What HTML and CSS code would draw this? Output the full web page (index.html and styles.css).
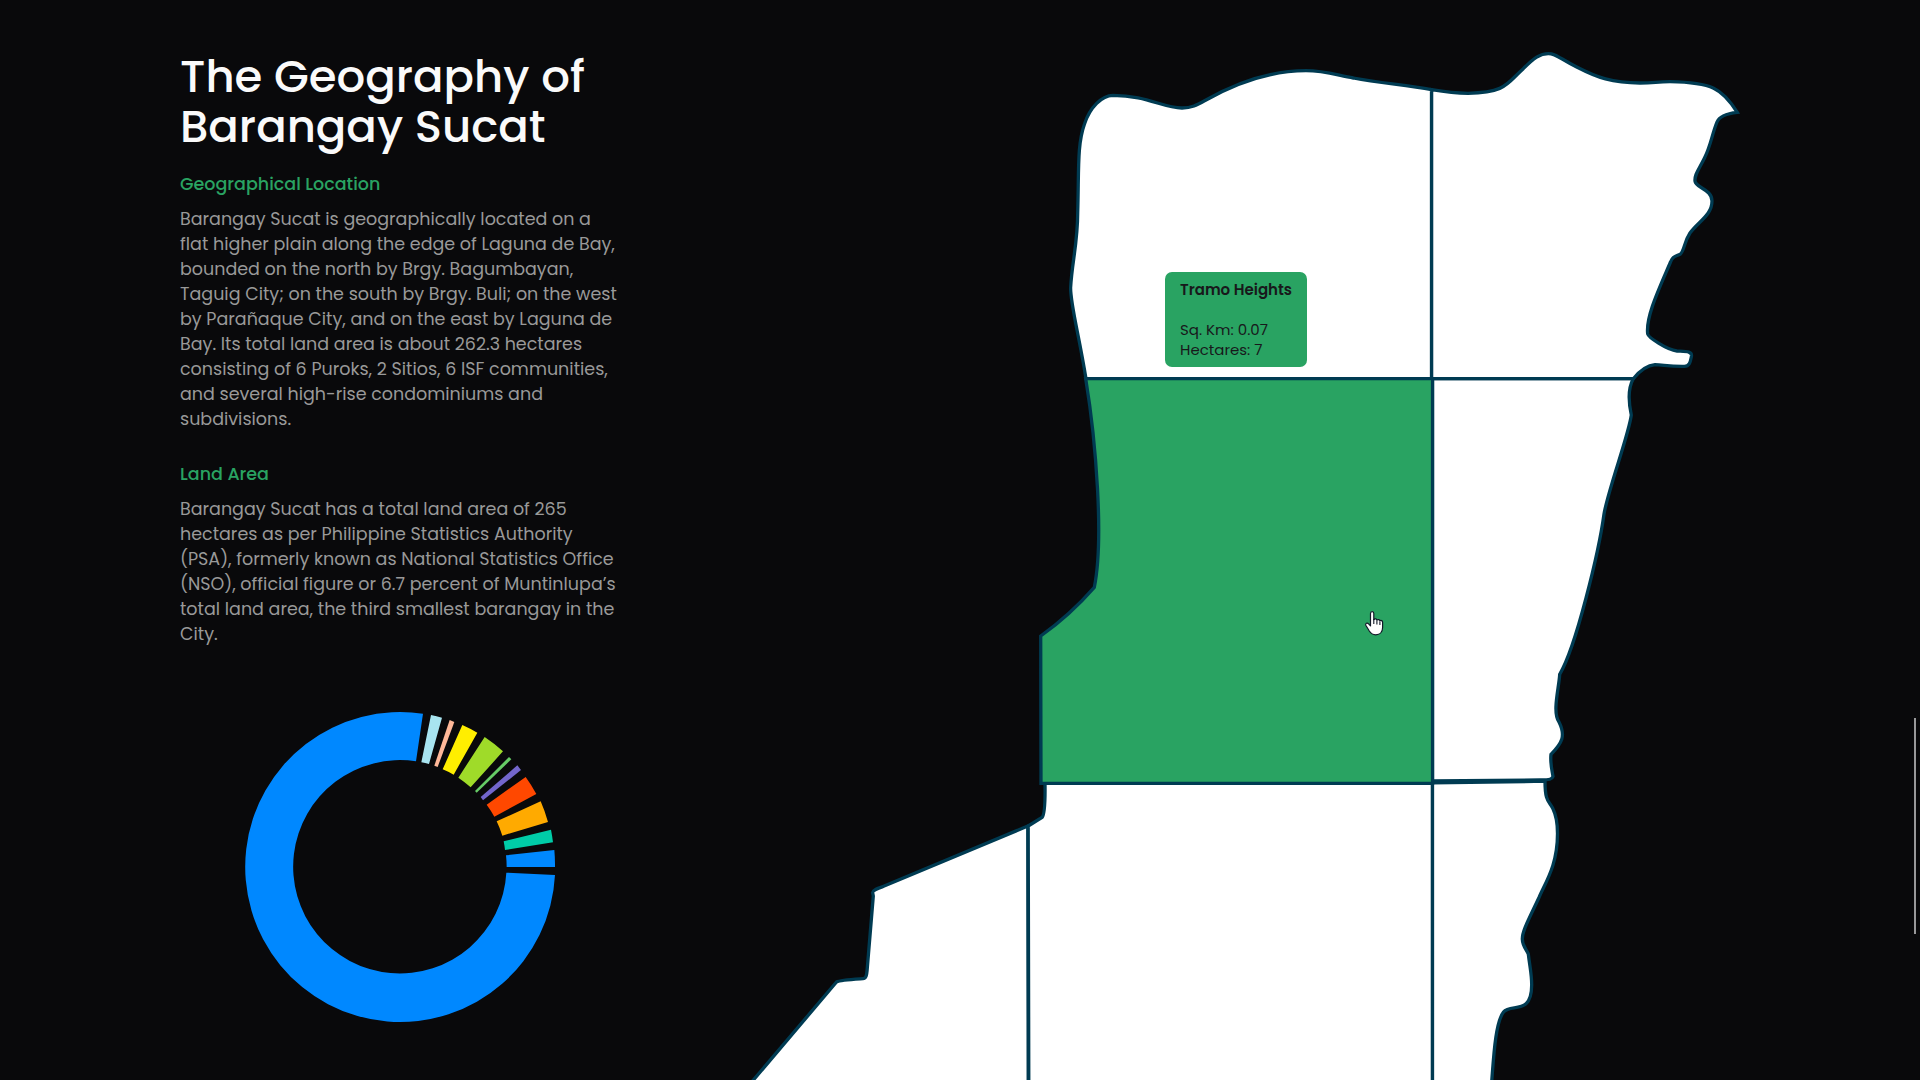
FILE: index.html
```html
<!DOCTYPE html>
<html lang="en">
<head>
<meta charset="utf-8">
<title>The Geography of Barangay Sucat</title>
<link rel="stylesheet" href="styles.css">
</head>
<body>
<main class="page">
  <section class="intro">
    <h1 class="title">The Geography of Barangay Sucat</h1>
    <h2 class="subtitle">Geographical Location</h2>
    <p class="copy">Barangay Sucat is geographically located on a flat higher plain along the edge of Laguna de Bay, bounded on the north by Brgy. Bagumbayan, Taguig City; on the south by Brgy. Buli; on the west by Parañaque City, and on the east by Laguna de Bay. Its total land area is about 262.3 hectares consisting of 6 Puroks, 2 Sitios, 6 ISF communities, and several high-rise condominiums and subdivisions.</p>
    <h2 class="subtitle">Land Area</h2>
    <p class="copy">Barangay Sucat has a total land area of 265 hectares as per Philippine Statistics Authority (PSA), formerly known as National Statistics Office (NSO), official figure or 6.7 percent of Muntinlupa’s total land area, the third smallest barangay in the City.</p>
    <svg class="donut" viewBox="0 0 1020 1050" role="img" aria-label="Land area by zone">
      <path fill="#0088ff" d="M975 555A465 465 0 1 1 579 71L558 214A320 320 0 1 0 829 548Z"/>
      <path fill="#a8e4f0" d="M603 75A465 465 0 0 1 636 83L597 222A320 320 0 0 0 574 217Z"/>
      <path fill="#ffb899" d="M659 90L673 96L623 231L613 227Z"/>
      <path fill="#ffee00" d="M697 105A465 465 0 0 1 742 128L671 254A320 320 0 0 0 638 238Z"/>
      <path fill="#9fdb29" d="M764 141A465 465 0 0 1 819 184L722 292A320 320 0 0 0 685 263Z"/>
      <path fill="#66cc66" d="M837 201L844 208L740 308L735 303Z"/>
      <path fill="#7366cc" d="M862 226L873 240L759 331L752 321Z"/>
      <path fill="#ff4800" d="M887 261A465 465 0 0 1 919 312L793 380A320 320 0 0 0 770 344Z"/>
      <path fill="#ffaa00" d="M932 334A465 465 0 0 1 954 396L817 437A320 320 0 0 0 800 394Z"/>
      <path fill="#00cca8" d="M963 419A465 465 0 0 1 969 457L825 480A320 320 0 0 0 821 454Z"/>
      <path fill="#0088ff" d="M973 480A465 465 0 0 1 975 531L830 531A320 320 0 0 0 828 496Z"/>
    </svg>
  </section>

  <section class="map">
    <svg class="zones" viewBox="740 0 1020 1080" role="img" aria-label="Map of Barangay Sucat">
      <path class="zone" d="M1027.8 826L883 886.500C877 888.700 872 890.500 872.700 893L873.300 896L867.300 968C866.700 976 866 978.500 863 978.700C852 979.400 840 980 836.500 982L750 1084H1028.200Z"/>
      <path class="zone" d="M1028.800 1084L1028.200 826L1042 817.500C1044.500 815 1045.300 800 1045 783.300H1432.500V1084Z"/>
      <path class="zone" d="M1432.500 782.900L1545 781.200C1545 802 1549 801 1552.700 808.300C1556 815 1557.500 826 1557.500 833.500C1557.500 866 1545 883 1539 897.500C1528 921 1522.300 931 1522.300 939C1522.500 946 1526 949 1528.300 954C1530 968 1531.700 974 1531.700 985C1531.500 1016 1511 1003 1503.500 1012C1495 1023 1493.500 1060 1491.500 1084H1432.500Z"/>
      <path class="zone" d="M1432.500 378.700H1633.300C1628 388 1628.500 402 1631.300 415C1629 434 1608 490 1604 514C1599 551 1576 647 1559.700 674.300C1559 688 1552 712 1559 722C1566 736 1562 743 1551 754.300C1550 763 1552 770 1553 776.500C1552 779.500 1550 779.700 1540 780L1432.500 780.900Z"/>
      <path class="zone" d="M1431.500 378.700V89.700C1453 93.300 1462 93.300 1468 93.300C1507 92.500 1507 83 1523.300 68.700C1534 58 1540 53.600 1548.300 53.600C1556 53.600 1559 58 1576.700 67C1597 77.500 1612 83 1640 83C1655 83 1656 81.700 1670 81.700C1712 82.500 1722 88 1737.300 112.300C1731 113 1720 114.500 1717 122C1712 134 1711 145 1704.500 158C1698 171 1694.500 174.500 1695 181C1695.500 188 1712 189 1712 201C1712 215 1699 221 1690 233C1683.500 243 1684.500 251 1680 254.300C1675 256.500 1672.500 256.500 1670.500 262C1659 289 1645.500 317 1647.700 334C1648.500 337.500 1667 350 1677 351C1686 351.500 1692 351 1691.500 356C1690.500 361 1690 366.500 1684 366.300C1668 366.500 1663 364.700 1655 364.700C1646 365.500 1638 373 1633.300 378.700Z"/>
      <path class="zone" d="M1086 378.700C1079 335 1070.600 305 1070.600 288C1072 262 1077.700 243 1077.700 213C1079 170 1077 145 1084.500 124C1090 107 1102 95.500 1113 95.300C1147 95.500 1163 108 1182 108C1192 108 1197 105 1206 100C1238 82 1272 70.700 1306 70.700C1325 70.700 1338 75.500 1353.300 78C1380 83 1405 85 1431.500 89.700V378.700Z"/>
      <path class="zone active" d="M1085.700 378.700H1432.500V783.300H1041L1040.700 636Q1070 615 1094.300 587.300C1104 540 1096 441 1085.700 378.700Z"/>
      <path class="hand" d="M1370.500 613.500c0-2.600 3.300-2.600 3.300 0v6.200c.6-1.200 3-1 3.100.5.700-1 2.900-.7 3 .7.900-.9 2.700-.2 2.700 1.400v5.200c0 4.600-3 7.300-6.900 7.300-3 0-4.800-1.300-6.400-3.800l-3.500-5.800c-.8-1.800 1.400-3 2.800-1.400l1.900 2.100z"/>
      <path class="knuckles" d="M1373.800 619v5M1376.900 620.500v4M1379.900 621.500v3.500"/>
    </svg>
    <div class="tooltip">
      <strong>Tramo Heights</strong>
      <span>Sq. Km: 0.07</span>
      <span>Hectares: 7</span>
    </div>
  </section>
  <div class="scroll-thumb"></div>
</main>
</body>
</html>
```
FILE: styles.css
```css
body {
  margin: 0;
  overflow: hidden;
  background: #09090b;
  color: #999;
  font-family: Poppins, Inter, sans-serif;
}

.page {
  position: relative;
  display: flex;
  gap: 120px;
  height: 1080px;
  box-sizing: border-box;
  padding-left: 180px;
  overflow: hidden;
}

.intro {
  width: 440px;
  padding-top: 52px;
  flex: none;
}

.title {
  margin: 0 0 20px;
  font-size: 45px;
  line-height: 50px;
  font-weight: 500;
  color: #fafafa;
}

.subtitle {
  margin: 0 0 10px;
  font-size: 17.5px;
  line-height: 25px;
  font-weight: 500;
  color: #29a362;
}

.copy {
  margin: 0 0 30px;
  font-size: 17.5px;
  line-height: 25px;
}

.donut {
  display: block;
  width: 340px;
  height: 350px;
  margin: 43px 0 0 50px;
}

.map {
  position: relative;
  flex: none;
  width: 1020px;
  height: 1080px;
}

.zones {
  display: block;
  width: 1020px;
  height: 1080px;
}

.zone {
  fill: #fff;
  stroke: #003b52;
  stroke-width: 3.3;
}

.zone.active { fill: #29a362; }

.hand {
  fill: #fff;
  stroke: #111827;
  stroke-width: 1.2;
  stroke-linejoin: round;
}

.knuckles {
  fill: none;
  stroke: #111827;
  stroke-width: 1.1;
}

.tooltip {
  position: absolute;
  left: 425px;
  top: 272px;
  box-sizing: border-box;
  width: 142px;
  height: 95px;
  padding: 8px 15px;
  border-radius: 7px;
  background: #29a362;
  color: #18181b;
  font-size: 15px;
  line-height: 20px;
  white-space: nowrap;
}

.tooltip strong {
  display: block;
  margin-bottom: 20px;
  font-weight: 600;
}

.tooltip span { display: block; }

.scroll-thumb {
  position: absolute;
  top: 718px;
  right: 4px;
  width: 2px;
  height: 216px;
  background: #98989a;
}
```
